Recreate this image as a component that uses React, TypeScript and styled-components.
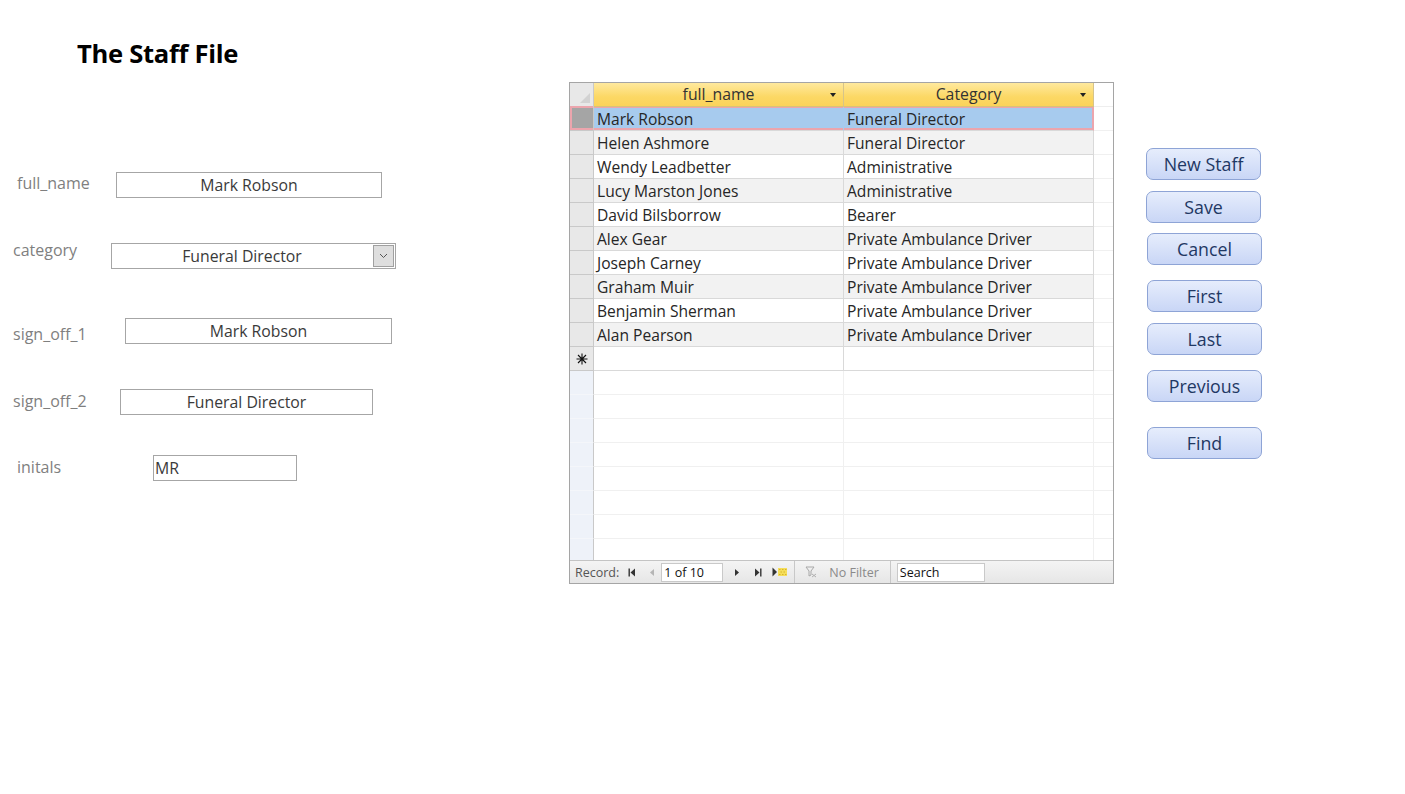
import * as React from "react";
import styled, { createGlobalStyle } from "styled-components";

const GlobalStyle = createGlobalStyle`
  html, body {
    margin: 0;
    padding: 0;
    background: #ffffff;
  }
  body {
    font-family: "Open Sans", "Noto Sans", sans-serif;
    color: #333333;
  }
`;

const staff = [
  { name: "Mark Robson", category: "Funeral Director" },
  { name: "Helen Ashmore", category: "Funeral Director" },
  { name: "Wendy Leadbetter", category: "Administrative" },
  { name: "Lucy Marston Jones", category: "Administrative" },
  { name: "David Bilsborrow", category: "Bearer" },
  { name: "Alex Gear", category: "Private Ambulance Driver" },
  { name: "Joseph Carney", category: "Private Ambulance Driver" },
  { name: "Graham Muir", category: "Private Ambulance Driver" },
  { name: "Benjamin Sherman", category: "Private Ambulance Driver" },
  { name: "Alan Pearson", category: "Private Ambulance Driver" },
];

const PINK = "#eca5ad";

const Page = styled.div`
  display: flex;
  align-items: flex-start;
  width: 1405px;
  height: 794px;
  overflow: hidden;
`;

const FormPane = styled.div`
  width: 569px;
  flex-shrink: 0;
  display: flex;
  flex-direction: column;
`;

const Title = styled.h1`
  margin: 37px 0 0 77px;
  font-family: "Open Sans", sans-serif;
  font-weight: 700;
  font-size: 25.6px;
  line-height: 34px;
  color: #000000;
  letter-spacing: -0.3px;
`;

const FieldRow = styled.div<{ $top: number }>`
  display: flex;
  align-items: center;
  height: 26px;
  margin-top: ${(p) => p.$top}px;
`;

const Label = styled.span<{ $indent: number; $width: number; $shift: number }>`
  margin-left: ${(p) => p.$indent}px;
  width: ${(p) => p.$width}px;
  flex-shrink: 0;
  font-size: 16px;
  color: #7f7f7f;
  position: relative;
  top: ${(p) => p.$shift}px;
`;

const TextBox = styled.div<{ $width: number; $align?: string }>`
  box-sizing: border-box;
  width: ${(p) => p.$width}px;
  height: 26px;
  border: 1px solid #a6a6a6;
  font-size: 15.8px;
  color: #3a3a3a;
  padding: 0 1px;
  display: flex;
  align-items: center;
  justify-content: ${(p) => (p.$align === "left" ? "flex-start" : "center")};
`;

const ComboBox = styled.div<{ $width: number }>`
  box-sizing: border-box;
  width: ${(p) => p.$width}px;
  height: 26px;
  border: 1px solid #a6a6a6;
  display: flex;
  align-items: stretch;
`;

const ComboText = styled.div`
  flex: 1;
  font-size: 15.8px;
  line-height: 24px;
  color: #3a3a3a;
  text-align: center;
`;

const ComboButton = styled.div`
  width: 19px;
  margin: 1px;
  border: 1px solid #a0a0a0;
  background: #dedede;
  display: flex;
  align-items: center;
  justify-content: center;
`;

/* datasheet */

const Sheet = styled.div`
  margin-top: 82px;
  box-sizing: border-box;
  width: 545px;
  height: 502px;
  border: 1px solid #a5a5a5;
  display: flex;
  flex-direction: column;
  background: #ffffff;
  font-family: "Open Sans", sans-serif;
`;

const Grid = styled.div`
  flex: 1;
  display: grid;
  grid-template-columns: 24px 250px 250px 1fr;
  grid-auto-rows: 24px;
  overflow: hidden;
`;

const Corner = styled.div`
  box-sizing: border-box;
  background: #e8e8e8;
  border-right: 1px solid #c9c9c9;
  border-bottom: 1px solid #c9c9c9;
  display: flex;
  align-items: flex-end;
  justify-content: flex-end;
  padding: 0 3px 3px 0;
`;

const HeaderCell = styled.div`
  box-sizing: border-box;
  background: linear-gradient(#ffe99e, #fcd865 60%, #fbd35a);
  border-right: 1px solid #d6c48a;
  border-bottom: 1px solid #d8c27a;
  font-size: 15.8px;
  line-height: 23px;
  color: #333333;
  text-align: center;
  position: relative;
`;

const SortArrow = styled.span`
  position: absolute;
  right: 7px;
  top: 10px;
  width: 0;
  height: 0;
  border-left: 3px solid transparent;
  border-right: 3px solid transparent;
  border-top: 4px solid #222222;
`;

const HeaderFiller = styled.div`
  background: #ffffff;
  border-bottom: 1px solid #eeeeee;
`;

type RowState = "row" | "selected" | "new" | "empty";

const Selector = styled.div<{ $state: RowState }>`
  box-sizing: border-box;
  border-right: 1px solid #c9c9c9;
  border-bottom: 1px solid
    ${(p) => (p.$state === "empty" ? "#f4f6fa" : "#c9c9c9")};
  background: ${(p) =>
    p.$state === "selected"
      ? "#a5a5a5"
      : p.$state === "empty"
      ? "#eef2f9"
      : "#e8e8e8"};
  box-shadow: ${(p) =>
    p.$state === "selected"
      ? `inset 2px 0 ${PINK}, inset 0 2px ${PINK}, inset 0 -2px ${PINK}`
      : "none"};
  margin-top: ${(p) => (p.$state === "selected" ? "-1px" : "0")};
  display: flex;
  align-items: center;
  justify-content: center;
`;

const Cell = styled.div<{ $bg: string; $faint?: boolean; $selected?: boolean; $last?: boolean }>`
  box-sizing: border-box;
  background: ${(p) => p.$bg};
  border-right: 1px solid
    ${(p) => (p.$selected ? (p.$last ? PINK : p.$bg) : p.$faint ? "#f0f0f0" : "#d9d9d9")};
  border-bottom: 1px solid ${(p) => (p.$faint ? "#f0f0f0" : "#d9d9d9")};
  box-shadow: ${(p) =>
    p.$selected
      ? `inset 0 2px ${PINK}, inset 0 -2px ${PINK}${p.$last ? `, inset -1px 0 ${PINK}` : ""}`
      : "none"};
  margin-top: ${(p) => (p.$selected ? "-1px" : "0")};
  height: ${(p) => (p.$selected ? "25px" : "auto")};
  padding-left: 3px;
  font-size: 15.6px;
  line-height: ${(p) => (p.$selected ? "26px" : "24px")};
  color: #262626;
  white-space: nowrap;
  overflow: hidden;
`;

const FillerCell = styled.div`
  background: #ffffff;
  border-bottom: 1px solid #f0f0f0;
`;

const NavBar = styled.div`
  height: 22px;
  flex-shrink: 0;
  border-top: 1px solid #c4c4c4;
  background: linear-gradient(#f4f4f4, #e6e6e6);
  display: flex;
  align-items: center;
  font-size: 12.5px;
  color: #555555;
`;

const NavLabel = styled.span`
  margin-left: 5px;
`;

const NavIcon = styled.span<{ $gap: number }>`
  display: inline-flex;
  margin-left: ${(p) => p.$gap}px;
`;

const NavInput = styled.div<{ $width: number; $gap: number }>`
  box-sizing: border-box;
  width: ${(p) => p.$width}px;
  height: 19px;
  margin-left: ${(p) => p.$gap}px;
  background: #ffffff;
  border: 1px solid #c9c9c9;
  padding-left: 2px;
  font-size: 12.5px;
  line-height: 17px;
  color: #111111;
`;

const NavSeparator = styled.span<{ $gap: number }>`
  width: 1px;
  align-self: stretch;
  background: #c8c8c8;
  margin-left: ${(p) => p.$gap}px;
`;

const FilterText = styled.span`
  margin-left: 12px;
  color: #8a8a8a;
`;

/* buttons */

const ButtonColumn = styled.div`
  display: flex;
  flex-direction: column;
  margin-left: 32px;
  margin-top: 148px;
`;

const ActionButton = styled.button<{ $top: number; $shift: number }>`
  box-sizing: border-box;
  width: 115px;
  height: 32px;
  margin-top: ${(p) => p.$top}px;
  margin-left: ${(p) => p.$shift}px;
  border: 1px solid #8ea4d6;
  border-radius: 7px;
  background: linear-gradient(#e6edfc, #c9d6f6);
  font-family: "Open Sans", sans-serif;
  font-size: 17.8px;
  color: #1f3864;
  padding: 0;
  cursor: pointer;
`;

const FirstIcon = () => (
  <svg width="8" height="9" viewBox="0 0 8 9">
    <rect x="0.5" y="0.5" width="1.4" height="8" fill="#333" />
    <path d="M7 0.5 L2.5 4.5 L7 8.5 Z" fill="#333" />
  </svg>
);

const PrevIcon = () => (
  <svg width="6" height="9" viewBox="0 0 6 9">
    <path d="M5 1 L1 4.5 L5 8 Z" fill="#b5b5b5" />
  </svg>
);

const NextIcon = () => (
  <svg width="6" height="9" viewBox="0 0 6 9">
    <path d="M1 1 L5 4.5 L1 8 Z" fill="#333" />
  </svg>
);

const LastIcon = () => (
  <svg width="8" height="9" viewBox="0 0 8 9">
    <path d="M1 0.5 L5.5 4.5 L1 8.5 Z" fill="#333" />
    <rect x="6.1" y="0.5" width="1.4" height="8" fill="#333" />
  </svg>
);

const NewRecIcon = () => (
  <svg width="16" height="10" viewBox="0 0 16 10">
    <path d="M0.5 0.5 L5 5 L0.5 9.5 Z" fill="#333" />
    <rect x="6" y="1" width="9" height="8" fill="#f5de5a" />
    <path d="M7 2.5 h1.5 M10 2.5 h1.5 M13 2.5 h1.5 M8.5 5 h1.5 M11.5 5 h1.5 M7 7.5 h1.5 M10 7.5 h1.5 M13 7.5 h1.5" stroke="#d9b52a" strokeWidth="1.2" />
  </svg>
);

const FilterIcon = () => (
  <svg width="12" height="12" viewBox="0 0 12 12">
    <path d="M1 1 H9 L6 5 V9 L4 10 V5 Z" fill="none" stroke="#a8a8a8" strokeWidth="1" />
    <path d="M7 8 L11 11 M11 8 L7 11" stroke="#b0b0b0" strokeWidth="1" />
  </svg>
);

const ChevronDown = () => (
  <svg width="9" height="6" viewBox="0 0 9 6">
    <path d="M1 1 L4.5 4.5 L8 1" fill="none" stroke="#555" strokeWidth="1" />
  </svg>
);

const CornerMark = () => (
  <svg width="10" height="10" viewBox="0 0 10 10">
    <path d="M10 0 L10 10 L0 10 Z" fill="#d2d2d2" />
  </svg>
);

const NewRowStar = () => (
  <svg width="12" height="12" viewBox="0 0 12 12">
    <path
      d="M6 0.5 V11.5 M0.5 6 H11.5 M2 2 L10 10 M10 2 L2 10"
      stroke="#111"
      strokeWidth="1.1"
    />
  </svg>
);

const EMPTY_ROWS = 8;

const App = () => {
  return (
    <React.Fragment>
      <GlobalStyle />
      <Page>
        <FormPane>
          <Title>The Staff File</Title>

          <FieldRow $top={101}>
            <Label $indent={17} $width={99} $shift={-2}>full_name</Label>
            <TextBox $width={266}>Mark Robson</TextBox>
          </FieldRow>

          <FieldRow $top={45}>
            <Label $indent={13} $width={98} $shift={-6}>category</Label>
            <ComboBox $width={285}>
              <ComboText>Funeral Director</ComboText>
              <ComboButton>
                <ChevronDown />
              </ComboButton>
            </ComboBox>
          </FieldRow>

          <FieldRow $top={49}>
            <Label $indent={13} $width={112} $shift={3}>sign_off_1</Label>
            <TextBox $width={267}>Mark Robson</TextBox>
          </FieldRow>

          <FieldRow $top={45}>
            <Label $indent={13} $width={107} $shift={-1}>sign_off_2</Label>
            <TextBox $width={253}>Funeral Director</TextBox>
          </FieldRow>

          <FieldRow $top={40}>
            <Label $indent={17} $width={136} $shift={-1}>initals</Label>
            <TextBox $width={144} $align="left">MR</TextBox>
          </FieldRow>
        </FormPane>

        <Sheet>
          <Grid>
            <Corner>
              <CornerMark />
            </Corner>
            <HeaderCell>
              full_name
              <SortArrow />
            </HeaderCell>
            <HeaderCell>
              Category
              <SortArrow />
            </HeaderCell>
            <HeaderFiller />

            {staff.map((s, i) => {
              const selected = i === 0;
              const bg = selected ? "#a7cbee" : i % 2 === 1 ? "#f2f2f2" : "#ffffff";
              return (
                <React.Fragment key={s.name}>
                  <Selector $state={selected ? "selected" : "row"} />
                  <Cell $bg={bg} $selected={selected}>{s.name}</Cell>
                  <Cell $bg={bg} $selected={selected} $last>{s.category}</Cell>
                  <FillerCell />
                </React.Fragment>
              );
            })}

            <Selector $state="new">
              <NewRowStar />
            </Selector>
            <Cell $bg="#ffffff" />
            <Cell $bg="#ffffff" />
            <FillerCell />

            {Array.from({ length: EMPTY_ROWS }).map((_, i) => (
              <React.Fragment key={i}>
                <Selector $state="empty" />
                <Cell $bg="#ffffff" $faint />
                <Cell $bg="#ffffff" $faint />
                <FillerCell />
              </React.Fragment>
            ))}
          </Grid>

          <NavBar>
            <NavLabel>Record:</NavLabel>
            <NavIcon $gap={9}>
              <FirstIcon />
            </NavIcon>
            <NavIcon $gap={13}>
              <PrevIcon />
            </NavIcon>
            <NavInput $width={62} $gap={6}>1 of 10</NavInput>
            <NavIcon $gap={11}>
              <NextIcon />
            </NavIcon>
            <NavIcon $gap={14}>
              <LastIcon />
            </NavIcon>
            <NavIcon $gap={10}>
              <NewRecIcon />
            </NavIcon>
            <NavSeparator $gap={6} />
            <NavIcon $gap={10}>
              <FilterIcon />
            </NavIcon>
            <FilterText>No Filter</FilterText>
            <NavSeparator $gap={11} />
            <NavInput $width={88} $gap={6}>Search</NavInput>
          </NavBar>
        </Sheet>

        <ButtonColumn>
          <ActionButton $top={0} $shift={0}>New Staff</ActionButton>
          <ActionButton $top={11} $shift={0}>Save</ActionButton>
          <ActionButton $top={10} $shift={1}>Cancel</ActionButton>
          <ActionButton $top={15} $shift={1}>First</ActionButton>
          <ActionButton $top={11} $shift={1}>Last</ActionButton>
          <ActionButton $top={15} $shift={1}>Previous</ActionButton>
          <ActionButton $top={25} $shift={1}>Find</ActionButton>
        </ButtonColumn>
      </Page>
    </React.Fragment>
  );
};

export default App;
